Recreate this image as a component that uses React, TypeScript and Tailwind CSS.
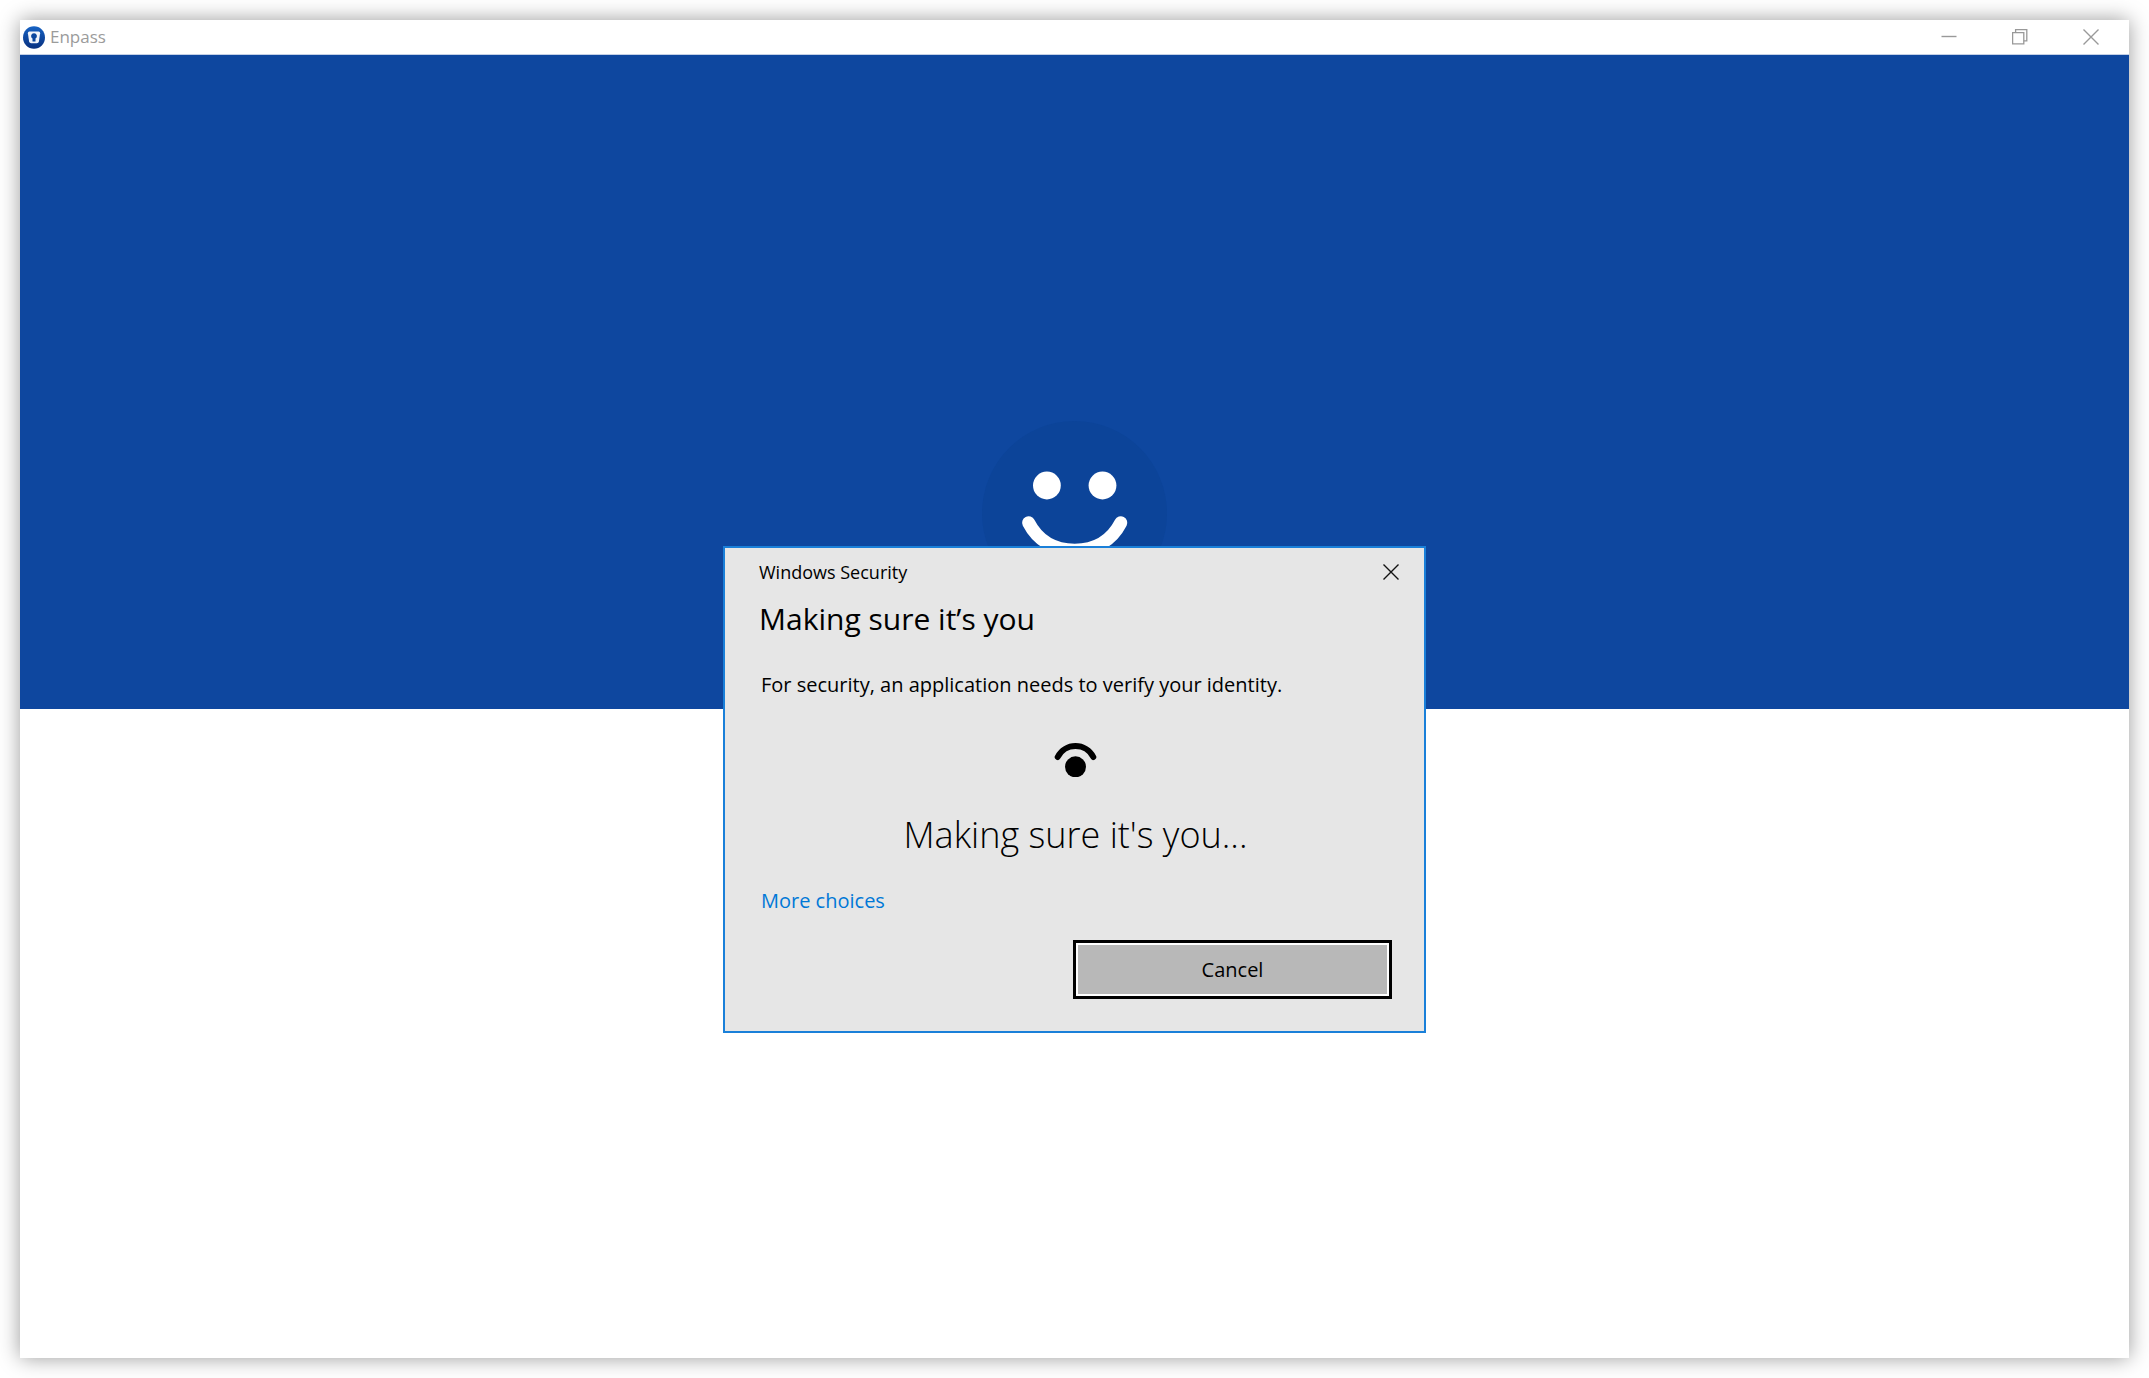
import { useState } from "react"

function EnpassLogo() {
  return (
    <svg width="22" height="23" viewBox="0 0 22 23" aria-hidden="true">
      <defs>
        <linearGradient id="logo-bg" x1="0" y1="0" x2="0" y2="1">
          <stop offset="0" stopColor="#1763c4" />
          <stop offset="1" stopColor="#08307f" />
        </linearGradient>
      </defs>
      <ellipse cx="11" cy="11.5" rx="11" ry="11.3" fill="url(#logo-bg)" />
      <path
        d="M6.4 5.6 H15.6 Q17.3 5.6 17.1 7.2 L15.9 15.4 Q15.6 17.2 13.9 17.2 H8.1 Q6.4 17.2 6.1 15.4 L4.9 7.2 Q4.7 5.6 6.4 5.6 Z"
        fill="#f1f4fa"
      />
      <path d="M11 7.2 a2.9 2.9 0 0 1 1.5 5.4 V15.4 H9.5 V12.6 A2.9 2.9 0 0 1 11 7.2 Z" fill="#0c479e" />
    </svg>
  )
}

function WindowButtons() {
  const button = "flex w-[71px] items-center justify-center text-[#999999]"

  return (
    <div className="flex self-stretch pr-[3px]">
      <button type="button" aria-label="Minimize" className={button}>
        <svg width="16" height="16" viewBox="0 0 16 16" fill="none" stroke="currentColor" strokeWidth="1.4">
          <path d="M0.5 7.5 H15.5" />
        </svg>
      </button>
      <button type="button" aria-label="Restore" className={button}>
        <svg width="16" height="16" viewBox="0 0 16 16" fill="none" stroke="currentColor" strokeWidth="1.3">
          <path d="M0.6 3.6 H11.8 V14.8 H0.6 Z" />
          <path d="M3.6 3.6 V0.6 H14.8 V11.8 H11.8" />
        </svg>
      </button>
      <button type="button" aria-label="Close" className={button}>
        <svg width="16" height="16" viewBox="0 0 16 16" fill="none" stroke="currentColor" strokeWidth="1.4">
          <path d="M0.5 0.5 L15.5 15.5 M15.5 0.5 L0.5 15.5" />
        </svg>
      </button>
    </div>
  )
}

function HelloFace() {
  return (
    <svg width="185" height="185" viewBox="0 0 185 185" aria-hidden="true">
      <circle cx="92.5" cy="92.5" r="92.5" fill="#0c4499" />
      <circle cx="64.9" cy="64.5" r="13.9" fill="#fff" />
      <circle cx="120.5" cy="64.5" r="13.9" fill="#fff" />
      <path
        d="M46.6 101.8 C55.2 118.5 71.2 129.2 92.7 129.2 C114.2 129.2 130.2 118.5 138.8 101.8"
        fill="none"
        stroke="#fff"
        strokeWidth="13"
        strokeLinecap="round"
      />
    </svg>
  )
}

function SecurityDialog({ onClose }: { onClose: () => void }) {
  return (
    <div
      role="dialog"
      aria-labelledby="dialog-title"
      className="relative flex w-full max-w-[703px] flex-col border-2 border-[#1a80d9] bg-[#e6e6e6] pr-8 pb-8 pl-[34px] text-[20px] leading-[30px] text-black"
    >
      <div className="flex h-12 items-center justify-between">
        <span className="text-[18px]">Windows Security</span>
        <button type="button" aria-label="Close dialog" onClick={onClose} className="-mr-6 flex h-12 w-[50px] items-center justify-center">
          <svg width="16" height="16" viewBox="0 0 16 16" fill="none" stroke="#111" strokeWidth="1.4">
            <path d="M0.5 0.5 L15.5 15.5 M15.5 0.5 L0.5 15.5" />
          </svg>
        </button>
      </div>

      <h1 id="dialog-title" className="mt-[2px] text-[30px] leading-[42px]">
        Making sure it’s you
      </h1>
      <p className="mt-[30px] pl-[2px]">For security, an application needs to verify your identity.</p>

      {/* Looking for you */}
      <div className="mt-[43px] flex flex-col items-center gap-[34px]">
        <svg width="43" height="34" viewBox="0 0 43 34" aria-hidden="true">
          <path d="M3.7 14 A20 20 0 0 1 39.3 14" fill="none" stroke="#000" strokeWidth="6" strokeLinecap="round" />
          <circle cx="21.5" cy="23.8" r="10.5" fill="#000" />
        </svg>
        <p className="text-[36px] leading-[48px] font-light">Making sure it's you...</p>
      </div>

      <a href="#more-choices" className="mt-[27px] self-start pl-[2px] text-[#0078d7]">
        More choices
      </a>
      <button
        type="button"
        onClick={onClose}
        className="mt-6 h-[59px] w-full max-w-[319px] self-end border-3 border-black bg-[#b8b8b8] inset-ring-2 inset-ring-white"
      >
        Cancel
      </button>
    </div>
  )
}

export default function App() {
  const [isVerifying, setIsVerifying] = useState(true)

  return (
    <div className="h-screen bg-white p-5 font-['Open_Sans','Noto_Sans',sans-serif]">
      <div className="relative flex h-full flex-col bg-white shadow-[0_0_20px_rgba(0,0,0,0.4)]">
        <header className="flex h-[35px] items-center border-b border-[#c3d0e6] pl-[3px]">
          <EnpassLogo />
          <span className="ml-[5px] text-[17px] text-[#9b9b9b]">Enpass</span>
          <div className="flex-1" />
          <WindowButtons />
        </header>
        <div className="flex-[654] bg-[#0e479f]" />
        <div className="flex-[649] bg-white" />

        {isVerifying && (
          <div className="absolute inset-0 flex flex-col items-center pt-[401px]">
            <HelloFace />
            <div className="-mt-[60px] flex w-full justify-center">
              <SecurityDialog onClose={() => setIsVerifying(false)} />
            </div>
          </div>
        )}
      </div>
    </div>
  )
}
